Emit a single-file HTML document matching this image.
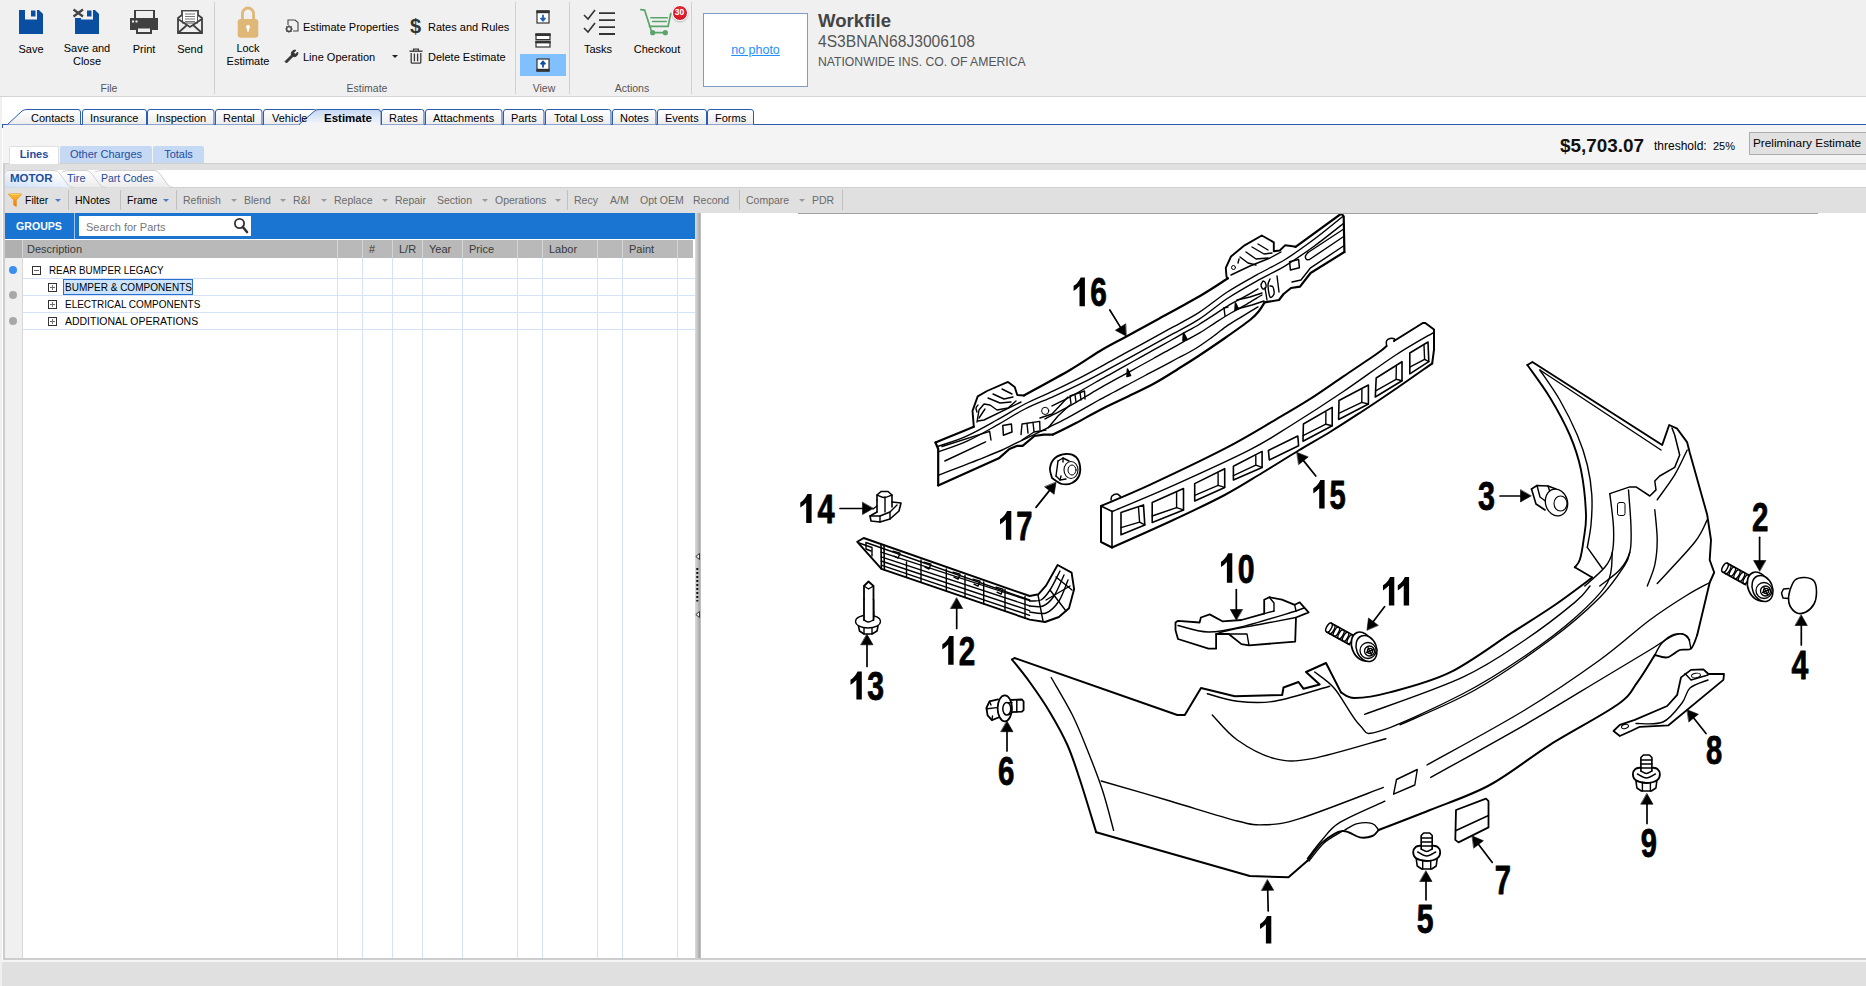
<!DOCTYPE html>
<html><head><meta charset="utf-8"><title>Workfile</title>
<style>
*{box-sizing:border-box;margin:0;padding:0}
html,body{width:1866px;height:986px;overflow:hidden;background:#fff}
body{font-family:"Liberation Sans",sans-serif;font-size:11px;color:#000;position:relative}
.abs{position:absolute}
.t{position:absolute;white-space:nowrap;line-height:13px}
.c{text-align:center}
.mt{top:112px}
/* ribbon */
#ribbon{left:0;top:0;width:1866px;height:96px;background:#f0f0f0}
#ribline{left:0;top:96px;width:1866px;height:1px;background:#d4d4d4}
.vsep{position:absolute;width:1px;background:#d0d0d0;top:2px;height:92px}
.grp{position:absolute;top:82px;font-size:10.5px;color:#555;white-space:nowrap;line-height:12px;transform:translateX(-50%)}
/* main tabs */
#tabband{left:0;top:97px;width:1866px;height:28px;background:#fff}
#leftedge{left:0;top:97px;width:2px;height:889px;background:#f0f0f0}
.mtab{position:absolute;top:109px;height:16px;border:1px solid #2b5cb0;border-bottom:none;border-radius:3px 3px 0 0;background:linear-gradient(#fff,#f0f0f0);font-size:11px;line-height:15px;text-align:center;white-space:nowrap}
#tabline{left:2px;top:124px;width:1864px;height:1px;background:#2b5cb0}
#sub{left:3px;top:125px;width:1863px;height:38px;background:#f4f4f4}
.stab{position:absolute;top:146px;height:17px;font-size:11px;line-height:16px;text-align:center;color:#1f4e9c;background:#c5d9f5;border-radius:2px 2px 0 0;white-space:nowrap}
#band1{left:4px;top:163px;width:1862px;height:7px;background:#e0e0e0;border-top:1px solid #d0d0d0}
#band2{left:5px;top:170px;width:1861px;height:17px;background:#fff}
#toolbar{left:5px;top:187px;width:1861px;height:26px;background:#e0e0e0;border-top:1px solid #d0d0d0}
.tb{position:absolute;top:194px;font-size:10.5px;line-height:13px;white-space:nowrap;color:#6a6a6a}
.tb.k{color:#000}
.dd{position:absolute;top:199px;width:0;height:0;border-left:3px solid transparent;border-right:3px solid transparent;border-top:3px solid #999}
.dd.b{border-top-color:#4a78c8}
.tsep{position:absolute;top:190px;width:1px;height:20px;background:#c0c0c0}
/* left panel */
#bluebar{left:5px;top:213px;width:690px;height:26px;background:#1a74d2}
#thead{left:5px;top:240px;width:688px;height:18px;background:#b9b9b9}
.th{position:absolute;top:243px;font-size:11px;line-height:13px;color:#3a3a3a;white-space:nowrap}
.hl{position:absolute;top:240px;height:18px;width:1px;background:#d4d4d4}
.vl{position:absolute;top:258px;height:700px;width:1px;background:#d4e3f8}
.rl{position:absolute;left:23px;width:672px;height:1px;background:#d4e3f8}
#gutter{left:5px;top:258px;width:18px;height:700px;background:#f0f0f0;border-right:1px solid #d8d8d8}
.row{position:absolute;transform-origin:0 0;font-size:11px;line-height:13px;white-space:nowrap;color:#000}
.box{position:absolute;width:9px;height:9px;border:1px solid #333;background:#fff}
.box:before{content:"";position:absolute;left:1px;top:3px;width:5px;height:1px;background:#666}
.box.p:after{content:"";position:absolute;left:3px;top:1px;width:1px;height:5px;background:#777}
.dot{position:absolute;width:8px;height:8px;border-radius:50%;background:#a8a8a8}
#split{left:695px;top:213px;width:6px;height:745px;background:linear-gradient(90deg,#dcdcdc,#c8c8c8 35%,#ababab 75%,#b8b8b8 90%,#dadada)}
#status{left:2px;top:960px;width:1864px;height:26px;background:#e0e0e0;border-top:2px solid #f5f5f5}
#frameL{left:3px;top:163px;width:2px;height:797px;background:#cdcdcd}
#frameB{left:3px;top:958px;width:1863px;height:2px;background:#cdcdcd}
</style></head><body>
<div class="abs" id="ribbon"></div>
<div class="abs" id="ribline"></div>
<div class="abs" id="tabband"></div>
<div class="abs" id="sub"></div>
<div class="abs" id="band1"></div>
<div class="abs" id="band2"></div>
<div class="abs" id="toolbar"></div>
<div class="abs" id="leftedge"></div>
<div class="abs" id="tabline"></div>
<!--RIBBON-->
<!-- File group -->
<svg class="abs" style="left:19px;top:10px" width="24" height="24" viewBox="0 0 24 24"><path d="M0 0H20L24 4V24H0Z" fill="#0a4ea2"/><rect x="6" y="0" width="12" height="9.5" fill="#f0f0f0"/><rect x="12" y="0.5" width="4.5" height="6" fill="#0a4ea2"/></svg>
<svg class="abs" style="left:72px;top:8px" width="28" height="26" viewBox="0 0 28 26"><path d="M3 2H23L27 6V26H3Z" fill="#0a4ea2"/><rect x="9" y="2" width="12" height="9.5" fill="#f0f0f0"/><rect x="15" y="2.5" width="4.5" height="6" fill="#0a4ea2"/><rect x="0" y="0" width="9" height="10" fill="#f0f0f0"/><path d="M1.5 1.5L11 8.5M11 1.5L1.5 8.5" stroke="#444" stroke-width="2.2" fill="none"/></svg>
<svg class="abs" style="left:130px;top:10px" width="28" height="24" viewBox="0 0 28 24"><rect x="5" y="0" width="19" height="10" fill="none" stroke="#404040" stroke-width="2"/><rect x="0" y="8" width="28" height="12" fill="#404040"/><rect x="2" y="10.5" width="2" height="2" fill="#f0f0f0"/><rect x="5.5" y="10.5" width="2" height="2" fill="#f0f0f0"/><rect x="7" y="17.5" width="14" height="5.5" fill="#f0f0f0" stroke="#404040" stroke-width="2"/></svg>
<svg class="abs" style="left:177px;top:8px" width="26" height="27" viewBox="0 0 26 27"><path d="M1 10L5 7V3H21V7L25 10V25H1Z" fill="#f0f0f0" stroke="#404040" stroke-width="1.8"/><rect x="5.5" y="3" width="15" height="12" fill="#fff" stroke="#555" stroke-width="1"/><path d="M8 6H18M8 8.5H18M8 11H18M8 13.5H18" stroke="#777" stroke-width="1"/><path d="M1 11L13 19L25 11M1 25L10 17M25 25L16 17" stroke="#404040" stroke-width="1.8" fill="none"/></svg>
<div class="t c" style="left:6px;top:43px;width:50px">Save</div>
<div class="t c" style="left:57px;top:42px;width:60px">Save and<br>Close</div>
<div class="t c" style="left:119px;top:43px;width:50px">Print</div>
<div class="t c" style="left:165px;top:43px;width:50px">Send</div>
<div class="grp" style="left:109px">File</div>
<div class="vsep" style="left:214px"></div>
<!-- Estimate group -->
<svg class="abs" style="left:236px;top:5px" width="24" height="34" viewBox="0 0 24 34"><path d="M6.4 16V8.6a5.6 5.6 0 0 1 11.2 0V16" fill="none" stroke="#dfb877" stroke-width="2.8"/><rect x="1.7" y="13.9" width="20.6" height="18.9" rx="3" fill="#dfb877"/><circle cx="12" cy="22" r="2" fill="#fff"/><rect x="11.1" y="22" width="1.8" height="4.6" fill="#fff"/></svg>
<div class="t c" style="left:218px;top:42px;width:60px">Lock<br>Estimate</div>
<svg class="abs" style="left:284px;top:18px" width="16" height="16" viewBox="0 0 16 16"><path d="M4 7V2H11L14 4.5V13H9" fill="none" stroke="#444" stroke-width="1.1"/><circle cx="5" cy="11" r="2.4" fill="none" stroke="#444" stroke-width="1.4"/><path d="M5 7.3V8.3M5 13.7V14.7M1.3 11H2.3M7.7 11H8.7M2.4 8.4L3.1 9.1M6.9 12.9L7.6 13.6M7.6 8.4L6.9 9.1M3.1 12.9L2.4 13.6" stroke="#444" stroke-width="1.2"/></svg>
<div class="t" style="left:303px;top:21px">Estimate Properties</div>
<div class="t" style="left:410px;top:15px;font-size:20px;font-weight:bold;line-height:22px;color:#333">$</div>
<div class="t" style="left:428px;top:21px">Rates and Rules</div>
<svg class="abs" style="left:284px;top:49px" width="15" height="15" viewBox="0 0 15 15"><path d="M1 12.5L7.5 6A3.6 3.6 0 0 1 12 1.3L9.6 3.7L11.3 5.4L13.7 3A3.6 3.6 0 0 1 9 7.5L2.5 14Z" fill="#333" stroke="#333" stroke-width="0.9" stroke-linejoin="round"/></svg>
<div class="t" style="left:303px;top:51px">Line Operation</div>
<div class="abs" style="left:392px;top:55px;width:0;height:0;border-left:3px solid transparent;border-right:3px solid transparent;border-top:3px solid #222"></div>
<svg class="abs" style="left:409px;top:48px" width="14" height="16" viewBox="0 0 14 16" fill="none" stroke="#3a3a3a"><path d="M0.5 3.2H13.5" stroke-width="1.4"/><path d="M4.5 3V1.2H9.5V3" stroke-width="1.2"/><path d="M2.2 5V14.2Q2.2 15.2 3.2 15.2H10.800Q11.800 15.2 11.800 14.2V5" stroke-width="1.3"/><path d="M5.4 5.500V13.2M8.6 5.500V13.2" stroke-width="1.3"/></svg>
<div class="t" style="left:428px;top:51px">Delete Estimate</div>
<div class="grp" style="left:367px">Estimate</div>
<div class="vsep" style="left:515px"></div>
<!-- View group -->
<div class="abs" style="left:520px;top:54px;width:46px;height:22px;background:#80c0ff"></div>
<svg class="abs" style="left:536px;top:10px" width="14" height="14" viewBox="0 0 14 14"><rect x="1" y="1" width="12" height="12" fill="#fff" stroke="#333" stroke-width="1.2"/><rect x="0.4" y="0.4" width="13.2" height="2.8" fill="#333"/><path d="M7 4.800V10M4.6 7.800L7 10.600L9.400 7.800" stroke="#1f5fb8" stroke-width="1.800" fill="none"/></svg>
<svg class="abs" style="left:535px;top:33px" width="16" height="15" viewBox="0 0 16 15"><rect x="1" y="1" width="14" height="5.600" fill="#fff" stroke="#333" stroke-width="1.2"/><rect x="0.4" y="0.4" width="15.2" height="2.600" fill="#333"/><rect x="1" y="8.400" width="14" height="5.600" fill="#fff" stroke="#333" stroke-width="1.2"/><rect x="0.4" y="7.800" width="15.2" height="2.600" fill="#333"/></svg>
<svg class="abs" style="left:536px;top:58px" width="14" height="14" viewBox="0 0 14 14"><rect x="1" y="1" width="12" height="12" fill="#fff" stroke="#333" stroke-width="1.2"/><rect x="0.4" y="10.800" width="13.2" height="2.800" fill="#333"/><path d="M7 9.600V4.400M4.600 6.400L7 3.600L9.400 6.400" stroke="#0a4ea2" stroke-width="1.800" fill="none"/></svg>
<div class="grp" style="left:544px">View</div>
<div class="vsep" style="left:569px"></div>
<!-- Actions group -->
<svg class="abs" style="left:583px;top:8px" width="33" height="28" viewBox="0 0 33 28"><path d="M1 7L5 11L12 2M1 20L5 24L12 15" fill="none" stroke="#333" stroke-width="1.6"/><path d="M16 5.2H32M16 12.100H32M16 19.2H32M16 26H32" stroke="#333" stroke-width="1.800"/></svg>
<div class="t c" style="left:573px;top:43px;width:50px">Tasks</div>
<svg class="abs" style="left:638px;top:7px" width="36" height="30" viewBox="0 0 36 30" fill="none" stroke="#5aa469" stroke-linecap="round"><path d="M2.8 2.6L6.6 3.1L13.2 23.6" stroke-width="1.7"/><path d="M32.7 6.7L30.1 19.3H11.5" stroke-width="1.7"/><path d="M12.9 10.700H29.3M14.500 14.400H28.400" stroke-width="1.5"/><path d="M14 25.600H28" stroke-width="1.6"/><circle cx="14.700" cy="25.700" r="2.600" fill="#5aa469" stroke="none"/><circle cx="27.300" cy="25.700" r="2.600" fill="#5aa469" stroke="none"/></svg>
<div class="abs" style="left:671.5px;top:5px;width:16px;height:16px;border-radius:50%;background:radial-gradient(circle at 50% 35%,#e8303c,#c8101c);border:1.5px solid #fff;box-shadow:0 1px 2px rgba(0,0,0,.25);color:#fff;font-size:8.5px;font-weight:bold;line-height:13px;text-align:center">30</div>
<div class="t c" style="left:627px;top:43px;width:60px">Checkout</div>
<div class="grp" style="left:632px">Actions</div>
<div class="vsep" style="left:691px"></div>
<!-- photo + workfile -->
<div class="abs" style="left:703px;top:13px;width:105px;height:74px;background:#fff;border:1px solid #7f9bc4"></div>
<div class="t c" style="left:703px;top:44px;width:105px;color:#1e90ff;text-decoration:underline;font-size:12.5px">no photo</div>
<div class="t" style="left:818px;top:10px;font-size:18.6px;line-height:21px;color:#444;font-weight:bold">Workfile</div>
<div class="t" style="left:818px;top:33px;font-size:15.6px;line-height:17px;color:#555">4S3BNAN68J3006108</div>
<div class="t" style="left:818px;top:55px;font-size:12.2px;line-height:14px;color:#555">NATIONWIDE INS. CO. OF AMERICA</div>
<!--/RIBBON-->
<!--TABS-->
<svg class="abs" style="left:0;top:105px" width="800" height="24" viewBox="0 105 800 24">
<defs><linearGradient id="tg" x1="0" y1="0" x2="0" y2="1"><stop offset="0" stop-color="#ffffff"/><stop offset="1" stop-color="#ececec"/></linearGradient><linearGradient id="sg" x1="0" y1="0" x2="0" y2="1"><stop offset="0" stop-color="#c4d7f2"/><stop offset="0.85" stop-color="#f0f3f9"/><stop offset="1" stop-color="#f4f4f4"/></linearGradient></defs>
<g fill="url(#tg)" stroke="#2b5cb0" stroke-width="1">
<path d="M7.5 124.5L22 111Q24 109.5 27 109.5H78Q80.5 109.5 80.5 112V124.5"/>
<path d="M82.5 124.5V112Q82.5 109.5 85 109.5H144Q146.5 109.5 146.5 112V124.5"/>
<path d="M147.5 124.5V112Q147.5 109.5 150 109.5H211.500Q214 109.5 214 112V124.5"/>
<path d="M215.500 124.5V112Q215.500 109.5 218 109.5H259.500Q262 109.5 262 112V124.5"/>
<path d="M263.500 124.5V112Q263.500 109.5 266 109.5H314.500Q317 109.5 317 112V124.5"/>
<path d="M381.500 124.5V112Q381.500 109.5 384 109.5H421.500Q424 109.5 424 112V124.5"/>
<path d="M425.500 124.5V112Q425.500 109.5 428 109.5H499.500Q502 109.5 502 112V124.5"/>
<path d="M503.500 124.5V112Q503.500 109.5 506 109.5H541.500Q544 109.5 544 112V124.5"/>
<path d="M545.500 124.5V112Q545.500 109.5 548 109.5H608.500Q611 109.5 611 112V124.5"/>
<path d="M612.500 124.5V112Q612.500 109.5 615 109.5H653.500Q656 109.5 656 112V124.5"/>
<path d="M657.500 124.5V112Q657.500 109.5 660 109.5H704Q706.500 109.5 706.500 112V124.5"/>
<path d="M707.500 124.5V112Q707.500 109.5 710 109.5H751Q753.500 109.5 753.500 112V124.5"/>
</g>
<path d="M299 125.500L314 111.500Q316 109.500 319 109.500H378Q380.500 109.500 380.500 112V125.500Z" fill="url(#sg)" stroke="none"/>
<path d="M299 124.5L314 111.500Q316 109.500 319 109.500H378Q380.500 109.500 380.500 112" fill="none" stroke="#2b5cb0" stroke-width="1"/><path d="M380.500 112V124.5" fill="none" stroke="#9db6df" stroke-width="1"/>
<path d="M2.5 128V124.5" stroke="#2b5cb0" fill="none"/>
</svg>
<div class="t mt" style="left:31px">Contacts</div>
<div class="t mt" style="left:90px">Insurance</div>
<div class="t mt" style="left:156px">Inspection</div>
<div class="t mt" style="left:223px">Rental</div>
<div class="t mt" style="left:272px">Vehicle</div>
<div class="t mt" style="left:324px;font-weight:bold;font-size:11.5px">Estimate</div>
<div class="t mt" style="left:389px">Rates</div>
<div class="t mt" style="left:433px">Attachments</div>
<div class="t mt" style="left:511px">Parts</div>
<div class="t mt" style="left:554px">Total Loss</div>
<div class="t mt" style="left:620px">Notes</div>
<div class="t mt" style="left:665px">Events</div>
<div class="t mt" style="left:715px">Forms</div>
<!-- sub tabs -->
<div class="stab" style="left:9px;width:50px;background:#fff;font-weight:bold;border:1px solid #e0e0e0;border-bottom:none;height:18px;line-height:14px">Lines</div>
<div class="stab" style="left:60px;width:92px">Other Charges</div>
<div class="stab" style="left:153px;width:51px">Totals</div>
<!-- right totals -->
<div class="t" style="left:1560px;top:135px;font-size:18.9px;font-weight:bold;line-height:21px;color:#111">$5,703.07</div>
<div class="t" style="left:1654px;top:140px;font-size:12px">threshold:</div>
<div class="t" style="left:1713px;top:140px;font-size:11px">25%</div>
<div class="abs" style="left:1749px;top:132px;width:120px;height:23px;background:#e1e1e1;border:1px solid #adadad;font-size:11.8px;line-height:21px;padding-left:3px;white-space:nowrap">Preliminary Estimate</div>
<!-- motor tabs -->
<svg class="abs" style="left:5px;top:170px" width="180" height="18" viewBox="5 170 180 18">
<defs><linearGradient id="mg" x1="0" y1="1" x2="0.6" y2="0"><stop offset="0" stop-color="#cfe0f7"/><stop offset="0.6" stop-color="#eef4fc"/><stop offset="1" stop-color="#ffffff"/></linearGradient>
<linearGradient id="gg" x1="0" y1="0" x2="0" y2="1"><stop offset="0" stop-color="#ffffff"/><stop offset="1" stop-color="#ececec"/></linearGradient></defs>
<path d="M62 187.500H170L160 174Q158 170.500 154 170.500H56Z" fill="url(#gg)"/>
<path d="M5 187.500V173Q5 170.500 8 170.500H54Q58 170.500 60 174L70 187.500Z" fill="url(#mg)"/>
<path d="M5 173Q5 170.500 8 170.500H54Q58 170.500 60 174L68 185Q70 187.500 74 187.500" fill="none" stroke="#d0d0d0"/>
<path d="M62 172Q66 170.500 70 170.500H86Q90 170.500 92 174L100 185Q102 187.500 106 187.500" fill="none" stroke="#d0d0d0"/>
<path d="M95 172Q98 170.500 102 170.500H154Q158 170.500 160 174L168 185Q170 187.500 174 187.500" fill="none" stroke="#d0d0d0"/>
</svg>
<div class="t" style="left:10px;top:172px;font-weight:bold;color:#1f4e9c;font-size:11.5px">MOTOR</div>
<div class="t" style="left:67px;top:172px;color:#1f4e9c">Tire</div>
<div class="t" style="left:101px;top:172px;color:#1f4e9c;font-size:10.5px">Part Codes</div>
<!--/TABS-->
<!--TOOLBAR-->
<svg class="abs" style="left:8px;top:193px" width="14" height="14" viewBox="0 0 14 14"><defs><linearGradient id="fg" x1="0" y1="0" x2="0" y2="1"><stop offset="0" stop-color="#ffc83a"/><stop offset="0.45" stop-color="#ff9a16"/><stop offset="1" stop-color="#f57c00"/></linearGradient></defs><path d="M0.5 1.2H13.5L8.3 7V13.5L5.7 12V7Z" fill="url(#fg)" stroke="#e88a10" stroke-width="0.7"/><ellipse cx="7" cy="1.6" rx="6.2" ry="1" fill="#ffd866" stroke="#e89a20" stroke-width="0.5"/></svg>
<div class="tb k" style="left:25px">Filter</div><div class="dd b" style="left:55px"></div>
<div class="tsep" style="left:68px"></div>
<div class="tb k" style="left:75px">HNotes</div>
<div class="tsep" style="left:120px"></div>
<div class="tb k" style="left:127px">Frame</div><div class="dd b" style="left:163px"></div>
<div class="tsep" style="left:176px"></div>
<div class="tb" style="left:183px">Refinish</div><div class="dd" style="left:231px"></div>
<div class="tb" style="left:244px">Blend</div><div class="dd" style="left:280px"></div>
<div class="tb" style="left:293px">R&amp;I</div><div class="dd" style="left:321px"></div>
<div class="tb" style="left:334px">Replace</div><div class="dd" style="left:382px"></div>
<div class="tb" style="left:395px">Repair</div>
<div class="tb" style="left:437px">Section</div><div class="dd" style="left:482px"></div>
<div class="tb" style="left:495px">Operations</div><div class="dd" style="left:555px"></div>
<div class="tsep" style="left:567px"></div>
<div class="tb" style="left:574px">Recy</div>
<div class="tb" style="left:610px">A/M</div>
<div class="tb" style="left:640px">Opt OEM</div>
<div class="tb" style="left:693px">Recond</div>
<div class="tsep" style="left:739px"></div>
<div class="tb" style="left:746px">Compare</div><div class="dd" style="left:799px"></div>
<div class="tb" style="left:812px">PDR</div>
<div class="tsep" style="left:842px"></div>
<div class="abs" style="left:798px;top:213px;width:1020px;height:1px;background:#a0a0a0"></div>
<!--/TOOLBAR-->
<!--LEFT-->
<div class="abs" id="bluebar"></div>
<div class="t" style="left:16px;top:220px;font-size:10.6px;font-weight:bold;color:#fff">GROUPS</div>
<div class="abs" style="left:74px;top:213px;width:1px;height:26px;background:#9cc4f0"></div>
<div class="abs" style="left:79px;top:216px;width:172px;height:20px;background:#fff"></div>
<div class="t" style="left:86px;top:221px;color:#777">Search for Parts</div>
<svg class="abs" style="left:233px;top:217px" width="16" height="17" viewBox="0 0 16 17"><circle cx="6.5" cy="6.500" r="4.6" fill="none" stroke="#333" stroke-width="1.8"/><path d="M9.8 10L14 15" stroke="#333" stroke-width="2.6" stroke-linecap="round"/></svg>
<div class="abs" id="thead"></div>
<div class="abs" style="left:5px;top:240px;width:18px;height:18px;background:#b0b0b0"></div>
<div class="hl" style="left:22px"></div><div class="hl" style="left:337px"></div><div class="hl" style="left:362px"></div><div class="hl" style="left:392px"></div><div class="hl" style="left:422px"></div><div class="hl" style="left:462px"></div><div class="hl" style="left:517px"></div><div class="hl" style="left:542px"></div><div class="hl" style="left:597px"></div><div class="hl" style="left:622px"></div><div class="hl" style="left:677px"></div>
<div class="th" style="left:27px">Description</div><div class="th" style="left:369px">#</div><div class="th" style="left:399px">L/R</div><div class="th" style="left:429px">Year</div><div class="th" style="left:469px">Price</div><div class="th" style="left:549px">Labor</div><div class="th" style="left:629px">Paint</div>
<div class="abs" id="gutter"></div>
<div class="vl" style="left:337px"></div><div class="vl" style="left:362px"></div><div class="vl" style="left:392px"></div><div class="vl" style="left:422px"></div><div class="vl" style="left:462px"></div><div class="vl" style="left:517px"></div><div class="vl" style="left:542px"></div><div class="vl" style="left:597px"></div><div class="vl" style="left:622px"></div><div class="vl" style="left:677px"></div>
<div class="rl" style="top:278px"></div><div class="rl" style="top:295px"></div><div class="rl" style="top:312px"></div><div class="rl" style="top:329px"></div>
<div class="dot" style="left:9px;top:266px;background:#3b8ff0"></div>
<div class="dot" style="left:9px;top:291px"></div>
<div class="dot" style="left:9px;top:317px"></div>
<div class="box" style="left:32px;top:266px"></div>
<div class="row" style="left:49px;top:264px;transform:scaleX(0.893)">REAR BUMPER LEGACY</div>
<div class="box p" style="left:48px;top:283px"></div>
<div class="abs" style="left:63px;top:279px;width:130px;height:16px;background:#cce4fb;border:1px solid #2a6fd0"></div>
<div class="row" style="left:65px;top:281px;transform:scaleX(0.911)">BUMPER &amp; COMPONENTS</div>
<div class="box p" style="left:48px;top:300px"></div>
<div class="row" style="left:65px;top:298px;transform:scaleX(0.906)">ELECTRICAL COMPONENTS</div>
<div class="box p" style="left:48px;top:317px"></div>
<div class="row" style="left:65px;top:315px;transform:scaleX(0.951)">ADDITIONAL OPERATIONS</div>
<!--/LEFT-->
<div class="abs" id="split"></div>
<div class="abs" id="status"></div>
<div class="abs" id="frameL"></div><div class="abs" id="frameB"></div>
<svg class="abs" style="left:695px;top:550px" width="6" height="70" viewBox="695 550 6 70"><path d="M699.5 553.5V559.5L695.8 556.5Z M699.5 611.500V617.500L695.8 614.500Z" fill="#e8e8e8" stroke="#222" stroke-width="0.9"/><path d="M697.3 568v2M697.3 572v2M697.3 576v2M697.3 580v2M697.3 584v2M697.3 588v2M697.3 592v2M697.3 596v2M697.3 600v1.500" stroke="#111" stroke-width="2"/></svg>
<!--DIAGRAM-->
<svg class="abs" style="left:701px;top:214px" width="1165" height="745" viewBox="701 214 1165 745" stroke="#000" stroke-linejoin="round" stroke-linecap="round">
<g font-family="Liberation Sans, sans-serif" font-weight="bold" font-size="40" fill="#000" stroke="#000" stroke-width="0.8">
<path d="M1084.9 277.4 L1084.9 306.2 L1079.5 306.2 L1079.5 286.0 Q1077.0 288.9 1073.6 290.9 L1073.6 285.8 Q1078.0 283.2 1080.7 277.4 Z" fill="#000" stroke="none"/>
<text x="1090.2" y="306.2" textLength="16.6" lengthAdjust="spacingAndGlyphs">6</text>
<path d="M1324.6 479.9 L1324.6 508.6 L1319.2 508.6 L1319.2 488.5 Q1316.7 491.4 1313.3 493.4 L1313.3 488.2 Q1317.7 485.6 1320.4 479.9 Z" fill="#000" stroke="none"/>
<text x="1329.5" y="508.6" textLength="16.2" lengthAdjust="spacingAndGlyphs">5</text>
<path d="M1011.3 511.0 L1011.3 539.7 L1005.9 539.7 L1005.9 519.6 Q1003.4 522.5 1000.0 524.5 L1000.0 519.3 Q1004.4 516.7 1007.1 511.0 Z" fill="#000" stroke="none"/>
<text x="1016.2" y="539.7" textLength="16.2" lengthAdjust="spacingAndGlyphs">7</text>
<path d="M811.6 494.0 L811.6 523.0 L806.2 523.0 L806.2 502.7 Q803.7 505.6 800.3 507.6 L800.3 502.4 Q804.7 499.8 807.4 494.0 Z" fill="#000" stroke="none"/>
<text x="817.4" y="523.0" textLength="17.1" lengthAdjust="spacingAndGlyphs">4</text>
<path d="M861.8 671.6 L861.8 699.5 L856.4 699.5 L856.4 680.0 Q853.9 682.8 850.5 684.7 L850.5 679.7 Q854.9 677.2 857.6 671.6 Z" fill="#000" stroke="none"/>
<text x="867.2" y="699.5" textLength="16.8" lengthAdjust="spacingAndGlyphs">3</text>
<path d="M953.6 636.0 L953.6 664.7 L948.2 664.7 L948.2 644.6 Q945.7 647.5 942.3 649.5 L942.3 644.3 Q946.7 641.7 949.4 636.0 Z" fill="#000" stroke="none"/>
<text x="958.8" y="664.7" textLength="16.5" lengthAdjust="spacingAndGlyphs">2</text>
<path d="M1232.3 553.3 L1232.3 582.7 L1226.9 582.7 L1226.9 562.1 Q1224.4 565.1 1221.0 567.1 L1221.0 561.8 Q1225.4 559.2 1228.1 553.3 Z" fill="#000" stroke="none"/>
<text x="1237.8" y="582.7" textLength="16.8" lengthAdjust="spacingAndGlyphs">0</text>
<path d="M1394.3 577.0 L1394.3 605.6 L1388.9 605.6 L1388.9 585.6 Q1386.4 588.4 1383.0 590.4 L1383.0 585.3 Q1387.4 582.7 1390.1 577.0 Z" fill="#000" stroke="none"/>
<path d="M1409.1 577.0 L1409.1 605.6 L1403.7 605.6 L1403.7 585.6 Q1401.2 588.4 1397.8 590.4 L1397.8 585.3 Q1402.2 582.7 1404.9 577.0 Z" fill="#000" stroke="none"/>
<text x="998.0" y="785.0" textLength="16.4" lengthAdjust="spacingAndGlyphs">6</text>
<text x="1478.0" y="510.3" textLength="17.0" lengthAdjust="spacingAndGlyphs">3</text>
<text x="1752.0" y="531.0" textLength="16.4" lengthAdjust="spacingAndGlyphs">2</text>
<text x="1791.6" y="678.6" textLength="16.8" lengthAdjust="spacingAndGlyphs">4</text>
<text x="1706.0" y="763.5" textLength="16.2" lengthAdjust="spacingAndGlyphs">8</text>
<text x="1640.8" y="856.9" textLength="16.2" lengthAdjust="spacingAndGlyphs">9</text>
<text x="1494.8" y="893.6" textLength="16.2" lengthAdjust="spacingAndGlyphs">7</text>
<text x="1416.8" y="932.8" textLength="16.8" lengthAdjust="spacingAndGlyphs">5</text>
<path d="M1271.3 916.0 L1271.3 943.5 L1265.9 943.5 L1265.9 924.2 Q1263.4 927.0 1260.0 928.9 L1260.0 924.0 Q1264.4 921.5 1267.1 916.0 Z" fill="#000" stroke="none"/>
</g>
<path d="M1109.8 310.0 L1120.4 327.1" stroke-width="1.7" fill="none"/>
<path d="M1126.0 336.0 L1115.4 330.3 L1125.5 323.9 Z" fill="#000" stroke-width="0.6"/>
<path d="M1315.8 476.0 L1303.5 460.6" stroke-width="1.7" fill="none"/>
<path d="M1297.0 452.4 L1308.2 456.9 L1298.8 464.4 Z" fill="#000" stroke-width="0.6"/>
<path d="M1036.0 507.4 L1049.4 490.6" stroke-width="1.7" fill="none"/>
<path d="M1056.0 482.4 L1054.1 494.3 L1044.8 486.9 Z" fill="#000" stroke-width="0.6"/>
<path d="M840.0 508.5 L862.5 508.5" stroke-width="1.7" fill="none"/>
<path d="M873.0 508.5 L862.5 514.5 L862.5 502.5 Z" fill="#000" stroke-width="0.6"/>
<path d="M867.0 666.5 L867.0 644.8" stroke-width="1.7" fill="none"/>
<path d="M867.0 634.3 L873.0 644.8 L861.0 644.8 Z" fill="#000" stroke-width="0.6"/>
<path d="M956.7 628.5 L956.7 608.5" stroke-width="1.7" fill="none"/>
<path d="M956.7 598.0 L962.7 608.5 L950.7 608.5 Z" fill="#000" stroke-width="0.6"/>
<path d="M1236.3 589.6 L1236.3 609.5" stroke-width="1.7" fill="none"/>
<path d="M1236.3 620.0 L1230.3 609.5 L1242.3 609.5 Z" fill="#000" stroke-width="0.6"/>
<path d="M1384.7 606.6 L1373.3 621.6" stroke-width="1.7" fill="none"/>
<path d="M1367.0 630.0 L1368.5 618.0 L1378.1 625.2 Z" fill="#000" stroke-width="0.6"/>
<path d="M1007.0 751.0 L1007.0 731.7" stroke-width="1.7" fill="none"/>
<path d="M1007.0 721.2 L1013.0 731.7 L1001.0 731.7 Z" fill="#000" stroke-width="0.6"/>
<path d="M1500.0 496.0 L1520.5 496.0" stroke-width="1.7" fill="none"/>
<path d="M1531.0 496.0 L1520.5 502.0 L1520.5 490.0 Z" fill="#000" stroke-width="0.6"/>
<path d="M1759.6 537.3 L1759.6 560.5" stroke-width="1.7" fill="none"/>
<path d="M1759.6 571.0 L1753.6 560.5 L1765.6 560.5 Z" fill="#000" stroke-width="0.6"/>
<path d="M1801.3 645.0 L1801.3 625.5" stroke-width="1.7" fill="none"/>
<path d="M1801.3 615.0 L1807.3 625.5 L1795.3 625.5 Z" fill="#000" stroke-width="0.6"/>
<path d="M1706.0 733.5 L1693.7 718.0" stroke-width="1.7" fill="none"/>
<path d="M1687.2 709.8 L1698.4 714.3 L1689.0 721.8 Z" fill="#000" stroke-width="0.6"/>
<path d="M1647.0 823.6 L1647.0 804.2" stroke-width="1.7" fill="none"/>
<path d="M1647.0 793.7 L1653.0 804.2 L1641.0 804.2 Z" fill="#000" stroke-width="0.6"/>
<path d="M1492.3 862.4 L1478.6 844.4" stroke-width="1.7" fill="none"/>
<path d="M1472.3 836.0 L1483.4 840.7 L1473.9 848.0 Z" fill="#000" stroke-width="0.6"/>
<path d="M1426.0 899.8 L1426.0 881.5" stroke-width="1.7" fill="none"/>
<path d="M1426.0 871.0 L1432.0 881.5 L1420.0 881.5 Z" fill="#000" stroke-width="0.6"/>
<path d="M1268.2 911.0 L1267.7 890.3" stroke-width="1.7" fill="none"/>
<path d="M1267.5 879.8 L1273.7 890.2 L1261.7 890.4 Z" fill="#000" stroke-width="0.6"/>
<path d="M1012.0 659.5 L1014.5 658.0 L1177.3 715.0 L1184.8 715.0 L1201.0 688.0 L1234.8 696.2 L1282.2 695.0 L1283.5 687.5 L1298.5 682.0 L1303.4 688.7 L1319.7 684.5 L1306.0 672.0 L1326.0 663.0 L1341.0 692.4" stroke-width="2" fill="none" />
<path d="M1341.0 692.4 C1343.3 693.3 1346.5 698.0 1354.6 698.0 C1362.7 698.0 1373.7 696.7 1389.6 692.4 C1405.5 688.1 1429.5 682.4 1450.0 672.4 C1470.5 662.4 1494.9 643.6 1512.4 632.4 C1529.9 621.2 1541.5 614.1 1554.8 605.0 C1568.1 595.9 1586.0 582.1 1592.3 577.5" stroke-width="2" fill="none"/>
<path d="M1012.0 659.5 C1015.0 663.3 1023.7 673.7 1030.0 682.5 C1036.3 691.3 1043.8 702.0 1050.0 712.4 C1056.2 722.8 1062.4 733.7 1067.4 745.0 C1072.4 756.3 1075.2 765.5 1080.0 780.0 C1084.8 794.5 1093.5 823.6 1096.2 832.3" stroke-width="2" fill="none"/>
<path d="M1051.2 677.5 C1054.7 683.8 1066.4 702.9 1072.4 715.0 C1078.4 727.1 1082.4 737.5 1087.4 750.0 C1092.4 762.5 1098.0 776.6 1102.4 790.0 C1106.8 803.4 1111.7 823.6 1113.6 830.3" stroke-width="1.4" fill="none"/>
<path d="M1096.2 832.3 L1249.8 876.0 L1288.5 877.3 L1307.2 861.0" stroke-width="2" fill="none" />
<path d="M1307.2 861.0 C1309.7 857.9 1316.5 847.4 1322.4 842.4 C1328.3 837.4 1336.2 831.8 1342.4 831.0 C1348.7 830.2 1354.9 836.6 1359.9 837.4 C1364.9 838.2 1369.3 837.2 1372.4 836.0 C1375.5 834.8 1377.6 831.0 1378.6 830.0" stroke-width="1.9" fill="none"/>
<path d="M1378.6 830.0 C1387.2 826.7 1411.5 817.5 1430.0 810.0 C1448.5 802.5 1469.8 795.9 1489.8 785.0 C1509.8 774.1 1528.7 758.2 1549.9 744.8 C1571.2 731.4 1602.7 715.2 1617.3 704.8 C1631.9 694.4 1631.0 690.7 1637.3 682.4 C1643.5 674.1 1651.9 659.6 1654.8 655.0" stroke-width="2" fill="none"/>
<path d="M1344.9 829.9 C1347.0 828.9 1352.8 824.6 1357.4 823.6 C1362.0 822.6 1368.9 822.6 1372.4 823.6 C1375.9 824.6 1377.6 828.9 1378.6 829.9" stroke-width="1.4" fill="none"/>
<path d="M1307.4 858.6 C1309.9 855.5 1316.8 845.8 1322.2 839.8 C1327.6 833.8 1329.5 828.8 1339.9 822.4 C1350.4 816.0 1377.4 804.7 1384.9 801.2" stroke-width="1.4" fill="none"/>
<path d="M1309.0 861.0 C1311.5 858.0 1318.7 847.8 1324.0 843.0 C1329.3 838.2 1338.2 833.8 1341.0 832.0" stroke-width="1.4" fill="none"/>
<path d="M1101.2 781.0 C1112.7 784.3 1147.3 794.3 1170.0 801.0 C1192.7 807.7 1221.5 817.0 1237.3 821.0 C1253.1 825.0 1254.3 825.2 1264.7 824.8 C1275.1 824.4 1279.9 824.8 1299.7 818.6 C1319.5 812.4 1369.5 792.6 1383.4 787.4" stroke-width="1.4" fill="none"/>
<path d="M1396.5 779.5 L1417.3 769.5 L1414.8 785.0 L1393.6 794.2 Z" stroke-width="1.4" fill="none" />
<path d="M1212.3 715.0 C1216.5 719.2 1226.9 732.7 1237.3 740.0 C1247.7 747.3 1262.2 755.5 1274.7 758.6 C1287.2 761.7 1293.7 761.9 1312.2 758.6 C1330.7 755.3 1373.6 742.0 1385.9 738.7" stroke-width="1.4" fill="none"/>
<path d="M1207.3 693.7 C1212.3 695.0 1226.1 700.0 1237.3 701.2 C1248.5 702.5 1259.3 703.7 1274.7 701.2 C1290.1 698.7 1320.5 688.7 1329.7 686.2" stroke-width="1.4" fill="none"/>
<path d="M1314.7 672.0 C1318.0 674.8 1327.2 679.9 1334.7 688.7 C1342.2 697.5 1352.1 717.9 1359.6 725.0 C1367.1 732.1 1362.5 736.4 1379.6 731.2 C1396.7 726.0 1438.2 706.5 1462.4 694.0 C1486.6 681.5 1506.2 668.7 1524.9 656.0 C1543.6 643.3 1561.1 630.2 1574.8 618.0 C1588.5 605.8 1601.0 594.0 1607.3 583.0 C1613.5 572.0 1611.5 557.4 1612.3 552.3" stroke-width="1.4" fill="none"/>
<path d="M1364.6 714.4 C1380.9 708.2 1435.7 689.8 1462.4 677.4 C1489.1 665.0 1506.2 652.5 1524.9 640.0 C1543.6 627.5 1564.0 611.4 1574.8 602.4 C1585.6 593.4 1587.5 588.7 1590.0 586.0" stroke-width="1.4" fill="none"/>
<path d="M1427.0 765.0 C1443.3 755.8 1496.1 727.5 1524.9 710.0 C1553.7 692.5 1579.0 675.0 1599.8 660.0 C1620.6 645.0 1635.2 630.8 1649.8 620.0 C1664.4 609.2 1677.2 601.2 1687.2 595.0 C1697.2 588.8 1706.0 584.6 1709.7 582.5" stroke-width="1.4" fill="none"/>
<path d="M1430.8 777.4 C1446.5 768.6 1496.7 741.0 1524.9 724.8 C1553.1 708.6 1579.0 692.5 1599.8 680.0 C1620.6 667.5 1638.1 657.1 1649.8 650.0 C1661.5 642.9 1664.3 640.1 1669.7 637.4 C1675.1 634.7 1678.9 633.3 1682.2 633.7 C1685.5 634.1 1688.5 639.0 1689.7 640.0" stroke-width="1.4" fill="none"/>
<path d="M1400.0 724.8 C1412.5 719.0 1450.0 704.1 1475.0 690.0 C1500.0 675.9 1529.1 655.4 1549.9 640.0 C1570.7 624.6 1587.3 609.9 1599.8 597.4 C1612.3 584.9 1619.8 572.5 1624.8 565.0 C1629.8 557.5 1629.0 554.4 1629.8 552.3" stroke-width="1.4" fill="none"/>
<path d="M1654.8 655.0 C1656.9 655.4 1663.0 658.2 1667.2 657.4 C1671.4 656.6 1675.7 651.5 1679.7 650.0 C1683.7 648.5 1688.1 651.1 1691.0 648.6 C1693.9 646.1 1696.2 637.3 1697.2 635.0" stroke-width="1.8" fill="none"/>
<path d="M1697.2 635.0 L1709.7 582.5 L1714.2 572.5 L1709.7 560.0 L1711.0 540.0 L1707.2 514.8 L1689.7 452.4 L1687.2 442.4 L1677.2 428.7 L1669.2 425.0 L1662.2 445.0 L1532.4 362.0 L1527.4 365.0" stroke-width="1.9" fill="none" />
<path d="M1654.8 655.0 C1656.0 653.0 1658.8 646.4 1662.0 643.0 C1665.2 639.6 1669.8 635.7 1674.0 634.5 C1678.2 633.3 1684.2 633.6 1687.0 636.0 C1689.8 638.4 1690.3 646.5 1691.0 648.6" stroke-width="1.4" fill="none"/>
<path d="M1539.9 370.0 L1661.0 450.0" stroke-width="1.4" fill="none" />
<path d="M1527.4 365.0 C1531.2 370.4 1542.8 385.7 1549.9 397.4 C1557.0 409.1 1564.6 422.9 1569.8 435.0 C1575.0 447.1 1578.3 456.7 1581.0 470.0 C1583.7 483.3 1585.6 503.2 1586.0 514.8 C1586.4 526.4 1584.6 532.3 1583.6 539.8 C1582.6 547.3 1581.3 555.2 1579.8 559.8 C1578.3 564.4 1575.6 566.0 1574.8 567.3" stroke-width="1.9" fill="none"/>
<path d="M1574.8 567.3 L1592.3 577.5" stroke-width="1.8" fill="none" />
<path d="M1539.9 370.0 C1543.2 375.0 1553.6 389.2 1559.8 400.0 C1566.0 410.8 1572.7 424.2 1577.3 435.0 C1581.9 445.8 1584.9 455.0 1587.3 465.0 C1589.7 475.0 1591.2 484.8 1591.8 494.8 C1592.4 504.8 1591.8 516.0 1591.0 524.8 C1590.2 533.5 1587.9 543.5 1587.3 547.3" stroke-width="1.4" fill="none"/>
<path d="M1587.3 547.3 L1602.3 568.5" stroke-width="1.4" fill="none" />
<path d="M1609.8 493.6 L1629.8 486.9 L1636.0 486.9 L1649.8 496.0 L1656.0 489.9 L1654.8 481.0 L1659.7 476.0 L1674.7 467.4 L1679.7 455.0 L1674.7 435.0 L1672.0 428.0" stroke-width="1.5" fill="none" />
<path d="M1609.8 493.6 C1610.4 499.2 1613.1 517.5 1613.5 527.3 C1613.9 537.1 1613.8 545.6 1612.3 552.3 C1610.8 559.0 1609.4 561.7 1604.8 567.3 C1600.2 572.9 1588.1 582.9 1584.8 586.0" stroke-width="1.4" fill="none"/>
<path d="M1628.5 489.9 C1628.9 496.1 1630.8 516.9 1631.0 527.3 C1631.2 537.7 1631.7 545.2 1629.8 552.3 C1627.9 559.4 1624.8 564.2 1619.8 569.8 C1614.8 575.4 1603.1 583.3 1599.8 586.0" stroke-width="1.4" fill="none"/>
<path d="M1654.8 509.8 C1655.2 514.8 1657.2 530.6 1657.2 539.8 C1657.2 549.0 1656.5 557.1 1654.8 564.8 C1653.1 572.5 1648.5 582.5 1647.3 586.0" stroke-width="1.4" fill="none"/>
<path d="M1687.2 450.0 C1685.1 454.1 1679.7 466.6 1674.7 474.9 C1669.7 483.2 1660.1 495.6 1657.2 499.8" stroke-width="1.4" fill="none"/>
<path d="M1707.2 519.8 C1705.1 523.5 1703.0 531.7 1694.7 542.3 C1686.4 552.9 1663.5 576.6 1657.2 583.5" stroke-width="1.4" fill="none"/>
<rect x="1617.5" y="502.5" width="7.5" height="13" rx="2" stroke-width="1" fill="none"/>
<path d="M935.5 442.5 C938.8 441.2 948.6 437.1 955.0 434.5 C961.4 431.9 970.7 428.0 973.8 426.7" stroke-width="2.2" fill="none"/>
<path d="M1024.0 395.5 C1031.7 391.2 1057.3 377.4 1070.0 370.0 C1082.7 362.6 1090.7 356.6 1100.0 351.0 C1109.3 345.4 1116.6 341.9 1126.0 336.7 C1135.4 331.5 1144.3 326.8 1156.6 320.0 C1168.9 313.2 1188.1 302.9 1200.0 296.0 C1211.9 289.1 1223.3 281.2 1228.0 278.3" stroke-width="2.2" fill="none"/>
<path d="M1295.6 246.8 L1341.4 213.5" stroke-width="2.2" fill="none" />
<path d="M973.8 426.7 L972.5 410.9 L977.7 396.4 L987.0 391.0 L1008.0 381.9 L1014.7 387.0 L1017.3 395.0 L1024.0 395.5" stroke-width="1.9" fill="none" />
<path d="M977.0 422.0 L979.0 410.0 L984.0 404.0 L990.0 405.0 L997.0 410.0 L1008.0 408.0 L1016.0 401.0" stroke-width="1.4" fill="none" />
<path d="M979.0 418.0 L985.0 409.0" stroke-width="1.4" fill="none" />
<path d="M988.0 398.0 L1000.0 403.0 L1011.0 402.0" stroke-width="1.4" fill="none" />
<path d="M993.0 394.0 L1004.0 399.0 L1013.0 397.0" stroke-width="1.4" fill="none" />
<path d="M1002.0 389.0 L1012.0 394.0" stroke-width="1.4" fill="none" />
<path d="M978.0 421.0 L984.0 420.0 L1021.0 402.0" stroke-width="1.4" fill="none" />
<path d="M977.0 412.0 C976.8 411.3 975.8 409.2 976.0 408.0 C976.2 406.8 977.7 405.5 978.0 405.0" stroke-width="1.4" fill="none"/>
<path d="M1228.0 278.3 L1226.5 276.8 L1225.8 267.8 L1231.0 256.5 L1244.6 245.3 L1261.8 235.5 L1273.8 242.3 L1273.8 251.3 L1279.8 250.5 L1285.0 245.3 L1291.0 246.0 L1295.6 246.8" stroke-width="1.9" fill="none" />
<path d="M1231.0 275.0 L1250.0 266.0 L1270.0 258.0 L1281.0 252.0" stroke-width="1.4" fill="none" />
<path d="M1240.0 257.0 L1248.0 263.0 L1256.0 265.0" stroke-width="1.4" fill="none" />
<path d="M1246.0 252.0 L1256.0 259.0 L1268.0 258.0" stroke-width="1.4" fill="none" />
<path d="M1252.0 247.0 L1264.0 254.0 L1272.0 253.0" stroke-width="1.4" fill="none" />
<path d="M1258.0 244.0 L1268.0 250.0" stroke-width="1.4" fill="none" />
<path d="M1239.0 259.0 L1238.0 263.0" stroke-width="1.4" fill="none" />
<circle cx="1233.5" cy="267.5" r="2" stroke-width="1" fill="none"/>
<path d="M1341.4 213.5 L1343.7 216.5 L1344.4 252.0" stroke-width="2.2" fill="none" />
<path d="M935.5 442.5 L938.2 449.0 L938.2 485.4" stroke-width="2.2" fill="none" />
<path d="M938.2 485.4 L998.8 458.3 L1009.4 449.0 L1017.3 445.8 L1022.6 445.8 L1034.4 436.0 L1043.7 434.6 L1052.9 434.6" stroke-width="2.2" fill="none" />
<path d="M1052.9 434.6 C1056.8 432.7 1068.2 427.1 1076.0 423.0 C1083.8 418.9 1091.3 414.4 1100.0 410.0 C1108.7 405.6 1118.8 401.0 1128.0 396.5 C1137.2 392.0 1146.7 387.6 1155.0 383.0 C1163.3 378.4 1170.5 373.7 1178.0 369.0 C1185.5 364.3 1192.2 360.2 1200.0 355.0 C1207.8 349.8 1216.7 343.8 1225.0 338.0 C1233.3 332.2 1244.3 324.5 1250.0 320.0 C1255.7 315.5 1256.6 313.9 1259.0 311.0 C1261.4 308.1 1263.7 303.8 1264.6 302.4" stroke-width="2.2" fill="none"/>
<path d="M1264.6 302.4 L1279.0 300.0 L1283.6 294.0 L1291.0 288.0 L1300.0 286.6 L1310.6 273.0 L1344.4 252.0" stroke-width="2.2" fill="none" />
<path d="M938.2 446.4 C943.0 444.6 957.5 440.1 967.1 435.8 C976.8 431.5 986.4 425.9 996.0 420.5 C1005.7 415.2 1015.3 409.0 1024.9 404.0 C1034.6 399.0 1044.2 395.3 1053.9 390.6 C1063.5 386.0 1073.1 381.3 1082.8 376.3 C1092.4 371.3 1102.0 365.9 1111.7 360.6 C1121.3 355.3 1131.0 350.1 1140.6 344.8 C1150.2 339.5 1159.9 334.2 1169.5 328.9 C1179.2 323.5 1188.8 319.0 1198.4 312.9 C1208.1 306.7 1217.7 298.3 1227.3 292.0 C1237.0 285.7 1246.6 280.5 1256.3 275.1 C1265.9 269.7 1275.5 265.4 1285.2 259.5 C1294.8 253.5 1304.4 246.5 1314.1 239.3 C1323.7 232.1 1338.2 220.2 1343.0 216.3" stroke-width="1.4" fill="none"/>
<path d="M938.2 451.9 C943.0 450.1 957.5 445.5 967.1 441.1 C976.8 436.8 986.4 431.1 996.0 425.7 C1005.7 420.4 1015.3 413.9 1024.9 409.0 C1034.6 404.1 1044.2 400.7 1053.9 396.3 C1063.5 392.0 1073.1 387.5 1082.8 382.7 C1092.4 377.9 1102.0 372.6 1111.7 367.4 C1121.3 362.2 1131.0 356.9 1140.6 351.6 C1150.2 346.3 1159.9 341.0 1169.5 335.7 C1179.2 330.3 1188.8 325.9 1198.4 319.7 C1208.1 313.5 1217.7 304.9 1227.3 298.5 C1237.0 292.1 1246.6 286.7 1256.3 281.3 C1265.9 275.8 1275.5 271.6 1285.2 265.8 C1294.8 260.0 1304.4 253.2 1314.1 246.2 C1323.7 239.3 1338.2 227.6 1343.0 223.8" stroke-width="1.4" fill="none"/>
<path d="M1052.0 406.0 C1054.5 404.8 1061.8 401.3 1066.7 398.7 C1071.6 396.1 1076.5 393.3 1081.4 390.5 C1086.3 387.7 1091.2 384.8 1096.1 382.0 C1101.0 379.2 1106.0 376.5 1110.9 373.8 C1115.8 371.0 1120.7 368.3 1125.6 365.6 C1130.5 362.9 1135.4 360.1 1140.3 357.4 C1145.2 354.7 1150.1 352.0 1155.0 349.2 C1159.9 346.5 1164.8 343.7 1169.7 341.0 C1174.6 338.2 1179.5 335.5 1184.4 332.7 C1189.3 330.0 1194.2 327.5 1199.1 324.5 C1204.0 321.5 1209.0 318.1 1213.9 314.9 C1218.8 311.7 1223.7 308.2 1228.6 305.3 C1233.5 302.3 1238.4 300.1 1243.3 297.4 C1248.2 294.7 1255.5 290.3 1258.0 288.9" stroke-width="1.4" fill="none"/>
<path d="M1045.0 418.9 C1047.6 417.5 1055.3 413.6 1060.5 410.8 C1065.7 408.1 1070.8 405.3 1076.0 402.3 C1081.2 399.4 1086.3 396.1 1091.5 393.1 C1096.7 390.0 1101.8 387.1 1107.0 384.1 C1112.2 381.2 1117.3 378.4 1122.5 375.6 C1127.7 372.7 1132.8 369.9 1138.0 367.0 C1143.2 364.2 1148.3 361.3 1153.5 358.5 C1158.7 355.6 1163.8 352.7 1169.0 349.9 C1174.2 347.0 1179.3 344.1 1184.5 341.2 C1189.7 338.4 1194.8 335.7 1200.0 332.6 C1205.2 329.5 1210.3 325.8 1215.5 322.6 C1220.7 319.3 1225.8 316.0 1231.0 313.0 C1236.2 309.9 1241.3 307.3 1246.5 304.3 C1251.7 301.3 1259.4 296.5 1262.0 295.0" stroke-width="1.4" fill="none"/>
<path d="M938.2 475.4 C940.9 474.3 948.9 471.2 954.2 469.1 C959.5 467.1 964.9 465.0 970.2 462.9 C975.5 460.8 980.8 458.8 986.2 456.6 C991.5 454.5 996.8 452.4 1002.2 450.0 C1007.5 447.6 1012.8 444.7 1018.2 442.1 C1023.5 439.6 1028.8 437.2 1034.1 434.6 C1039.5 432.0 1044.8 429.3 1050.1 426.6 C1055.5 424.0 1060.8 421.5 1066.1 418.7 C1071.5 415.8 1076.8 412.8 1082.1 409.7 C1087.4 406.7 1092.8 403.5 1098.1 400.5 C1103.4 397.5 1108.8 394.8 1114.1 392.0 C1119.4 389.1 1124.8 386.3 1130.1 383.5 C1135.4 380.7 1140.7 377.9 1146.1 375.0 C1151.4 372.2 1156.7 369.4 1162.1 366.6 C1167.4 363.7 1172.7 360.9 1178.0 358.0 C1183.4 355.2 1188.7 352.7 1194.0 349.5 C1199.4 346.3 1204.7 342.5 1210.0 338.7 C1215.4 334.9 1220.7 330.3 1226.0 326.6 C1231.3 322.9 1236.7 319.9 1242.0 316.6 C1247.3 313.3 1255.3 308.5 1258.0 306.9" stroke-width="1.4" fill="none"/>
<path d="M1343.5 246.0 L1310.6 267.8 L1301.0 280.0 L1292.0 282.0" stroke-width="1.4" fill="none" />
<path d="M1308.0 252.5 L1343.0 229.5" stroke-width="1.4" fill="none" />
<path d="M1309.5 259.5 L1343.7 236.5" stroke-width="1.4" fill="none" />
<path d="M1308.0 252.5 C1307.6 253.1 1305.8 254.8 1305.5 256.0 C1305.2 257.2 1305.8 258.9 1306.5 259.5 C1307.2 260.1 1309.0 259.5 1309.5 259.5" stroke-width="1.4" fill="none"/>
<path d="M942.0 446.5 L989.6 431.3 L991.0 440.0" stroke-width="1.4" fill="none" />
<path d="M944.8 461.0 L985.6 441.9" stroke-width="1.4" fill="none" />
<path d="M1289.6 261.8 L1298.6 259.5 L1299.4 267.8 L1290.4 270.0 Z" stroke-width="1.5" fill="none" />
<path d="M1002.8 425.4 L1011.4 424.0 L1012.0 432.0 L1003.4 435.3 Z" stroke-width="1.5" fill="none" />
<circle cx="1045.2" cy="410.9" r="3.6" stroke-width="1" fill="none"/>
<path d="M1263.0 281.0 C1262.7 281.7 1261.0 283.7 1261.0 285.0 C1261.0 286.3 1262.2 288.7 1263.0 289.0 C1263.8 289.3 1265.7 288.2 1266.0 287.0 C1266.3 285.8 1265.5 283.0 1265.0 282.0 C1264.5 281.0 1263.3 281.2 1263.0 281.0" stroke-width="1.4" fill="none"/>
<path d="M1265.0 288.0 L1267.0 300.0" stroke-width="1.4" fill="none" />
<path d="M1270.0 279.0 C1269.7 280.0 1268.0 282.0 1268.0 285.0 C1268.0 288.0 1269.0 295.5 1270.0 297.0 C1271.0 298.5 1273.5 295.7 1274.0 294.0 C1274.5 292.3 1273.7 288.3 1273.0 287.0 C1272.3 285.7 1270.5 286.2 1270.0 286.0" stroke-width="1.4" fill="none"/>
<path d="M1277.0 276.0 L1279.0 292.0" stroke-width="1.4" fill="none" />
<path d="M1237.0 300.0 L1250.0 297.0 L1262.0 293.0" stroke-width="1.4" fill="none" />
<path d="M1237.0 309.0 L1252.0 305.0 L1264.0 301.0" stroke-width="1.4" fill="none" />
<path d="M1224.0 308.0 L1225.0 316.0" stroke-width="1.4" fill="none" />
<path d="M1224.0 308.0 L1228.0 307.0" stroke-width="1.4" fill="none" />
<path d="M1021.0 434.6 L1022.0 424.0 L1039.7 421.4 L1040.0 430.0" stroke-width="1.4" fill="none" />
<path d="M1027.0 423.5 L1028.0 433.0" stroke-width="1.4" fill="none" />
<path d="M1033.0 422.5 L1034.0 431.5" stroke-width="1.4" fill="none" />
<path d="M1022.0 440.0 L1034.0 432.0 L1046.0 430.0" stroke-width="1.4" fill="none" />
<path d="M1071.0 404.0 L1070.0 396.0 L1084.5 391.0 L1085.0 399.0" stroke-width="1.4" fill="none" />
<path d="M1075.0 394.5 L1076.0 402.0" stroke-width="1.4" fill="none" />
<path d="M1080.0 392.5 L1081.0 400.0" stroke-width="1.4" fill="none" />
<path d="M1048.0 428.0 L1058.0 416.0 L1070.0 405.0" stroke-width="1.4" fill="none" />
<path d="M1040.0 418.0 L1052.0 414.0 L1068.0 397.0" stroke-width="1.4" fill="none" />
<path d="M1127.5 369.0 L1130.5 375.5 L1127.0 376.5 Z" stroke-width="1.6" fill="#000" />
<path d="M1183.5 333.0 L1187.0 339.5 L1183.0 340.5 Z" stroke-width="1.6" fill="#000" />
<path d="M1235.5 303.0 L1238.5 309.0 L1235.0 310.0 Z" stroke-width="1.6" fill="#000" />
<path d="M1101.0 506.0 C1109.1 502.5 1129.2 494.4 1149.8 484.9 C1170.4 475.3 1203.9 459.5 1224.7 448.7 C1245.5 437.9 1260.5 428.5 1274.5 420.3 C1288.5 412.1 1297.5 407.0 1309.0 399.7 C1320.5 392.4 1331.9 384.2 1343.4 376.4 C1354.9 368.6 1370.7 358.1 1377.9 353.0 C1385.1 347.9 1385.1 347.2 1386.6 346.0" stroke-width="2" fill="none"/>
<path d="M1394.0 341.0 L1422.8 323.0 L1425.3 323.0 L1434.0 329.5 L1434.0 349.7 L1432.2 363.4" stroke-width="2" fill="none" />
<path d="M1386.6 346.0 C1386.6 345.2 1385.9 342.2 1386.5 341.0 C1387.1 339.8 1388.7 338.8 1390.0 338.5 C1391.3 338.2 1393.8 338.6 1394.5 339.0 C1395.2 339.4 1394.1 340.7 1394.0 341.0" stroke-width="1.5" fill="none"/>
<path d="M1111.0 500.0 C1111.2 499.3 1111.0 497.0 1112.0 496.0 C1113.0 495.0 1115.6 493.9 1117.0 494.0 C1118.4 494.1 1119.9 496.1 1120.5 496.5" stroke-width="1.5" fill="none"/>
<path d="M1112.3 511.5 C1122.7 507.1 1151.8 495.2 1174.7 484.9 C1197.6 474.6 1230.2 459.9 1249.7 449.9 C1269.2 439.9 1276.1 434.7 1291.7 425.0 C1307.3 415.3 1326.2 403.1 1343.4 391.5 C1360.6 379.9 1380.1 365.3 1395.0 355.5 C1409.9 345.7 1426.7 336.6 1433.0 332.8" stroke-width="1.4" fill="none"/>
<path d="M1112.0 547.5 C1121.7 543.2 1151.2 530.2 1170.0 521.5 C1188.8 512.8 1209.4 503.1 1224.7 495.0 C1240.0 486.9 1249.7 480.4 1262.0 473.0 C1274.3 465.6 1287.3 457.3 1298.6 450.5 C1309.9 443.7 1319.4 438.5 1330.0 432.0 C1340.6 425.5 1350.8 418.8 1362.0 411.5 C1373.2 404.2 1385.3 396.0 1397.0 388.0 C1408.7 380.0 1426.3 367.5 1432.2 363.4" stroke-width="2" fill="none"/>
<path d="M1101.0 506.0 L1101.0 542.0 L1112.0 547.5" stroke-width="2" fill="none" />
<path d="M1112.0 511.5 L1112.0 547.5" stroke-width="1.6" fill="none" />
<path d="M1101.0 506.0 L1112.3 511.5" stroke-width="1.6" fill="none" />
<path d="M1121.0 512.4 L1143.5 504.9 L1144.8 524.9 L1121.0 534.8 Z" stroke-width="1.6" fill="none" />
<path d="M1138.5 507.5 L1139.6 522.1" stroke-width="1.4" fill="none" />
<path d="M1121.0 527.6 L1139.6 522.1 L1144.8 524.9" stroke-width="1.4" fill="none" />
<path d="M1152.2 502.4 L1183.5 488.6 L1183.5 509.9 L1152.2 522.4 Z" stroke-width="1.6" fill="none" />
<path d="M1176.6 492.6 L1176.6 507.6" stroke-width="1.4" fill="none" />
<path d="M1152.2 516.0 L1176.6 507.6 L1183.5 509.9" stroke-width="1.4" fill="none" />
<path d="M1194.7 483.6 L1224.7 468.7 L1224.7 487.4 L1194.7 501.0 Z" stroke-width="1.6" fill="none" />
<path d="M1218.1 473.0 L1218.1 485.4" stroke-width="1.4" fill="none" />
<path d="M1194.7 495.4 L1218.1 485.4 L1224.7 487.4" stroke-width="1.4" fill="none" />
<path d="M1233.4 466.2 L1262.1 451.4 L1262.1 467.4 L1233.4 480.0 Z" stroke-width="1.6" fill="none" />
<path d="M1255.8 455.7 L1255.8 465.2" stroke-width="1.4" fill="none" />
<path d="M1233.4 475.6 L1255.8 465.2 L1262.1 467.4" stroke-width="1.4" fill="none" />
<path d="M1268.4 450.5 L1297.8 436.0 L1298.6 445.8 L1269.3 460.0 Z" stroke-width="1.6" fill="none" />
<path d="M1303.4 424.0 L1332.2 407.4 L1332.2 425.8 L1303.0 441.2 Z" stroke-width="1.6" fill="none" />
<path d="M1325.9 412.1 L1325.8 424.2" stroke-width="1.4" fill="none" />
<path d="M1303.1 435.7 L1325.8 424.2 L1332.2 425.8" stroke-width="1.4" fill="none" />
<path d="M1339.0 400.5 L1368.4 385.0 L1368.4 404.0 L1338.6 419.5 Z" stroke-width="1.6" fill="none" />
<path d="M1361.9 389.4 L1361.8 402.4" stroke-width="1.4" fill="none" />
<path d="M1338.7 413.4 L1361.8 402.4 L1368.4 404.0" stroke-width="1.4" fill="none" />
<path d="M1376.2 378.0 L1402.0 361.7 L1402.0 380.7 L1375.3 397.0 Z" stroke-width="1.6" fill="none" />
<path d="M1396.3 366.3 L1396.1 379.3" stroke-width="1.4" fill="none" />
<path d="M1375.6 390.9 L1396.1 379.3 L1402.0 380.7" stroke-width="1.4" fill="none" />
<path d="M1409.8 353.0 L1428.0 342.0 L1428.8 361.7 L1409.8 373.8 Z" stroke-width="1.6" fill="none" />
<path d="M1424.0 345.4 L1424.6 359.4" stroke-width="1.4" fill="none" />
<path d="M1409.8 367.1 L1424.6 359.4 L1428.8 361.7" stroke-width="1.4" fill="none" />
<path d="M857.3 541.8 L863.7 538.0 L1029.7 596.0 L1038.6 594.2 L1046.2 585.4 L1057.6 565.0 L1071.6 572.7 L1074.1 589.2 L1069.0 608.2 L1058.9 617.0 L1045.0 622.0 L1029.7 619.6 L881.4 568.9 Z" stroke-width="1.9" fill="none" />
<path d="M881.1 552.2 L1029.7 600.7" stroke-width="1.4" fill="none" />
<path d="M881.2 556.8 L1029.7 605.9" stroke-width="1.4" fill="none" />
<path d="M881.2 561.0 L1029.7 610.6" stroke-width="1.4" fill="none" />
<path d="M881.3 565.1 L1029.7 615.4" stroke-width="1.4" fill="none" />
<path d="M881.0 545.0 L881.4 568.9" stroke-width="1.6" fill="none" />
<path d="M884.0 546.0 L884.4 569.9" stroke-width="1.6" fill="none" />
<path d="M906.5 562.0 L906.5 577.5" stroke-width="1.4" fill="none" />
<path d="M866.0 542.5 L1029.7 600.0" stroke-width="1.4" fill="none" />
<path d="M859.0 543.0 L872.0 547.5 L872.0 556.0" stroke-width="1.4" fill="none" />
<path d="M866.0 543.0 L866.0 549.0 L871.0 551.0" stroke-width="1.4" fill="none" />
<path d="M921.0 560.0 L921.0 582.4" stroke-width="1.4" fill="none" />
<path d="M946.3 568.9 L946.3 591.1" stroke-width="1.4" fill="none" />
<path d="M965.0 575.4 L965.0 597.5" stroke-width="1.4" fill="none" />
<path d="M983.7 581.9 L983.7 603.9" stroke-width="1.4" fill="none" />
<path d="M1005.0 589.4 L1005.0 611.2" stroke-width="1.4" fill="none" />
<path d="M1025.0 596.4 L1025.0 618.0" stroke-width="1.4" fill="none" />
<path d="M893.0 551.2 L900.0 553.2 L898.0 558.2 L894.0 556.2" stroke-width="1.4" fill="none" />
<path d="M924.0 562.1 L931.0 564.1 L929.0 569.1 L925.0 567.1" stroke-width="1.4" fill="none" />
<path d="M953.0 572.2 L960.0 574.2 L958.0 579.2 L954.0 577.2" stroke-width="1.4" fill="none" />
<path d="M973.0 579.2 L980.0 581.2 L978.0 586.2 L974.0 584.2" stroke-width="1.4" fill="none" />
<path d="M996.0 587.2 L1003.0 589.2 L1001.0 594.2 L997.0 592.2" stroke-width="1.4" fill="none" />
<path d="M1029.7 601.0 C1031.6 600.8 1037.6 601.8 1041.0 600.0 C1044.4 598.2 1046.8 594.8 1050.0 590.0 C1053.2 585.2 1058.3 574.2 1060.0 571.0" stroke-width="1.4" fill="none"/>
<path d="M1029.7 606.0 C1031.9 606.0 1039.0 607.7 1043.0 606.0 C1047.0 604.3 1050.5 601.2 1054.0 596.0 C1057.5 590.8 1062.3 578.5 1064.0 575.0" stroke-width="1.4" fill="none"/>
<path d="M1029.7 612.0 C1032.4 612.2 1041.1 614.8 1046.0 613.0 C1050.9 611.2 1055.3 606.5 1059.0 601.0 C1062.7 595.5 1066.5 583.5 1068.0 580.0" stroke-width="1.4" fill="none"/>
<path d="M1050.0 590.0 L1066.0 611.0" stroke-width="1.4" fill="none" />
<path d="M1046.0 600.0 L1070.0 586.0" stroke-width="1.4" fill="none" />
<path d="M1038.0 595.0 L1043.0 621.0" stroke-width="1.4" fill="none" />
<path d="M1056.0 577.0 L1072.0 590.0" stroke-width="1.4" fill="none" />
<path d="M1052.0 478.0 C1051.7 476.3 1049.5 471.3 1050.0 468.0 C1050.5 464.7 1052.3 460.3 1055.0 458.0 C1057.7 455.7 1062.5 454.2 1066.0 454.0 C1069.5 453.8 1073.7 455.0 1076.0 457.0 C1078.3 459.0 1079.5 462.8 1080.0 466.0 C1080.5 469.2 1080.3 473.2 1079.0 476.0 C1077.7 478.8 1074.8 481.7 1072.0 483.0 C1069.2 484.3 1065.3 484.8 1062.0 484.0 C1058.7 483.2 1053.7 479.0 1052.0 478.0" stroke-width="1.8" fill="none"/>
<ellipse cx="1071" cy="470" rx="7" ry="8.5" stroke-width="1.1" fill="none"/>
<ellipse cx="1072" cy="470" rx="4" ry="5" stroke-width="1" fill="none"/>
<path d="M1058.0 461.0 L1063.0 458.0 L1069.0 461.0" stroke-width="1.4" fill="none" />
<path d="M1056.0 476.0 L1060.0 480.0 L1066.0 479.0" stroke-width="1.4" fill="none" />
<path d="M1058.0 461.0 L1056.0 476.0" stroke-width="1.4" fill="none" />
<path d="M1063.0 458.0 L1063.0 462.0" stroke-width="1.4" fill="none" />
<path d="M1060.0 480.0 L1061.0 476.0" stroke-width="1.4" fill="none" />
<path d="M877.0 500.0 L877.0 495.0 L881.0 491.5 L888.0 491.5 L892.0 495.0 L892.0 507.0" stroke-width="1.6" fill="none" />
<path d="M877.0 500.0 L877.0 512.0" stroke-width="1.6" fill="none" />
<path d="M885.0 497.0 L885.0 512.0" stroke-width="1.4" fill="none" />
<path d="M877.0 495.0 C878.2 495.4 881.5 497.5 884.0 497.5 C886.5 497.5 890.7 495.4 892.0 495.0" stroke-width="1.4" fill="none"/>
<path d="M892.0 502.0 L901.0 503.0 L899.0 511.0 L890.0 519.0 L880.0 522.0 L871.0 521.0 L870.0 516.0 L877.0 512.0" stroke-width="1.6" fill="none" />
<path d="M873.0 509.0 L877.0 506.0" stroke-width="1.4" fill="none" />
<path d="M880.0 516.0 L880.0 522.0" stroke-width="1.4" fill="none" />
<path d="M890.0 512.0 L890.0 519.0" stroke-width="1.4" fill="none" />
<path d="M870.0 516.0 L880.0 516.0 L890.0 512.0 L897.0 505.0" stroke-width="1.4" fill="none" />
<path d="M864.0 618.0 L864.0 586.0 L868.5 581.5 L873.5 586.0 L873.5 618.0" stroke-width="1.8" fill="none" />
<path d="M864.0 586.0 L868.5 589.0 L873.5 586.0" stroke-width="1.4" fill="none" />
<ellipse cx="868" cy="621.5" rx="12.5" ry="6.5" stroke-width="1.3" fill="#fff"/>
<path d="M864.0 618.0 L864.0 612.0" stroke-width="1.8" fill="none" />
<path d="M873.5 618.0 L873.5 612.0" stroke-width="1.8" fill="none" />
<rect x="863.3" y="600" width="10.8" height="19" fill="#fff" stroke="none"/>
<path d="M864.0 620.0 L864.0 600.0" stroke-width="1.8" fill="none" />
<path d="M873.5 620.0 L873.5 600.0" stroke-width="1.8" fill="none" />
<path d="M864.0 620.0 C864.8 620.3 866.9 622.0 868.5 622.0 C870.1 622.0 872.7 620.3 873.5 620.0" stroke-width="1.4" fill="none"/>
<path d="M858.5 626.0 L859.5 631.0 L864.0 634.0 L872.0 634.0 L877.0 631.0 L878.0 626.0" stroke-width="1.6" fill="none" />
<path d="M864.0 628.0 L864.0 634.0" stroke-width="1.4" fill="none" />
<path d="M872.0 628.0 L872.0 634.0" stroke-width="1.4" fill="none" />
<path d="M1175.5 622.5 L1178.0 620.8 L1199.6 622.5 L1200.9 617.5 L1209.7 614.4 L1222.4 621.3 L1241.4 620.0 L1264.2 613.7 L1264.2 599.7 L1269.3 597.2 L1282.0 599.7 L1294.7 604.8 L1299.7 602.3 L1308.6 612.4 L1296.0 617.5 L1295.2 641.6 L1249.0 645.4 L1241.4 644.1 L1228.7 634.0 L1216.1 634.0 L1216.1 648.7 L1208.5 648.7 L1178.0 639.0 L1175.5 630.2 Z" stroke-width="1.8" fill="none" />
<path d="M1178.0 625.5 C1183.0 626.6 1197.5 631.8 1208.0 632.0 C1218.5 632.2 1226.3 630.5 1241.0 627.0 C1255.7 623.5 1286.8 613.7 1296.0 611.0" stroke-width="1.4" fill="none"/>
<path d="M1216.1 634.0 C1218.1 633.4 1220.3 632.2 1228.0 630.5 C1235.7 628.8 1250.7 626.2 1262.0 624.0 C1273.3 621.8 1290.3 618.6 1296.0 617.5" stroke-width="1.4" fill="none"/>
<path d="M1269.3 597.2 L1274.0 603.0 L1274.0 611.0" stroke-width="1.4" fill="none" />
<path d="M1264.2 613.7 L1274.0 611.0" stroke-width="1.4" fill="none" />
<path d="M1228.7 634.0 L1247.0 634.0 L1249.0 645.4" stroke-width="1.4" fill="none" />
<path d="M1294.7 604.8 L1296.0 611.0" stroke-width="1.4" fill="none" />
<path d="M1296.0 611.0 L1304.0 608.0" stroke-width="1.4" fill="none" />
<path d="M1326.6 632.0 L1349.6 644.7" stroke-width="1.6" fill="none" />
<path d="M1331.4 623.2 L1354.4 635.9" stroke-width="1.6" fill="none" />
<ellipse cx="1331.8" cy="629.2" rx="2.2" ry="5.0" transform="rotate(28.9 1331.8 629.2)" stroke-width="1.4" fill="none"/>
<ellipse cx="1336.4" cy="631.7" rx="2.2" ry="5.0" transform="rotate(28.9 1336.4 631.7)" stroke-width="1.4" fill="none"/>
<ellipse cx="1341.0" cy="634.3" rx="2.2" ry="5.0" transform="rotate(28.9 1341.0 634.3)" stroke-width="1.4" fill="none"/>
<ellipse cx="1345.6" cy="636.8" rx="2.2" ry="5.0" transform="rotate(28.9 1345.6 636.8)" stroke-width="1.4" fill="none"/>
<ellipse cx="1350.2" cy="639.3" rx="2.2" ry="5.0" transform="rotate(28.9 1350.2 639.3)" stroke-width="1.4" fill="none"/>
<ellipse cx="1329.0" cy="627.6" rx="2.4" ry="5.0" transform="rotate(28.9 1329.0 627.6)" stroke-width="1.5" fill="#fff"/>
<ellipse cx="1362.5" cy="646.5" rx="10.5" ry="15" transform="rotate(-22 1362.5 646.5)" stroke-width="1.7" fill="#fff"/>
<ellipse cx="1366.5" cy="648.5" rx="10" ry="13.5" transform="rotate(-22 1366.5 648.5)" stroke-width="1.5" fill="#fff"/>
<circle cx="1368.0" cy="650.5" r="8" stroke-width="1.3" fill="none"/>
<circle cx="1369.5" cy="651.0" r="5" stroke-width="1.3" fill="none"/>
<circle cx="1370.0" cy="651.0" r="2.6" stroke-width="1.2" fill="none"/>
<path d="M1368.0 647.5 L1371.5 655.0" stroke-width="1.4" fill="none" />
<path d="M1366.5 652.5 L1373.5 649.5" stroke-width="1.4" fill="none" />
<path d="M1722.6 572.0 L1745.6 584.7" stroke-width="1.6" fill="none" />
<path d="M1727.4 563.2 L1750.4 575.9" stroke-width="1.6" fill="none" />
<ellipse cx="1727.8" cy="569.2" rx="2.2" ry="5.0" transform="rotate(28.9 1727.8 569.2)" stroke-width="1.4" fill="none"/>
<ellipse cx="1732.4" cy="571.7" rx="2.2" ry="5.0" transform="rotate(28.9 1732.4 571.7)" stroke-width="1.4" fill="none"/>
<ellipse cx="1737.0" cy="574.3" rx="2.2" ry="5.0" transform="rotate(28.9 1737.0 574.3)" stroke-width="1.4" fill="none"/>
<ellipse cx="1741.6" cy="576.8" rx="2.2" ry="5.0" transform="rotate(28.9 1741.6 576.8)" stroke-width="1.4" fill="none"/>
<ellipse cx="1746.2" cy="579.3" rx="2.2" ry="5.0" transform="rotate(28.9 1746.2 579.3)" stroke-width="1.4" fill="none"/>
<ellipse cx="1725.0" cy="567.6" rx="2.4" ry="5.0" transform="rotate(28.9 1725.0 567.6)" stroke-width="1.5" fill="#fff"/>
<ellipse cx="1758.5" cy="586.5" rx="10.5" ry="15" transform="rotate(-22 1758.5 586.5)" stroke-width="1.7" fill="#fff"/>
<ellipse cx="1762.5" cy="588.5" rx="10" ry="13.5" transform="rotate(-22 1762.5 588.5)" stroke-width="1.5" fill="#fff"/>
<circle cx="1764.0" cy="590.5" r="8" stroke-width="1.3" fill="none"/>
<circle cx="1765.5" cy="591.0" r="5" stroke-width="1.3" fill="none"/>
<circle cx="1766.0" cy="591.0" r="2.6" stroke-width="1.2" fill="none"/>
<path d="M1764.0 587.5 L1767.5 595.0" stroke-width="1.4" fill="none" />
<path d="M1762.5 592.5 L1769.5 589.5" stroke-width="1.4" fill="none" />
<path d="M1531.5 489.0 L1537.0 485.5 L1548.0 486.0 L1556.0 489.0" stroke-width="1.6" fill="none" />
<path d="M1531.5 489.0 L1536.0 504.0 L1545.0 510.0" stroke-width="1.6" fill="none" />
<path d="M1537.0 485.5 L1540.0 497.0 L1548.0 503.0" stroke-width="1.4" fill="none" />
<path d="M1548.0 486.0 L1550.0 492.0" stroke-width="1.4" fill="none" />
<ellipse cx="1556.5" cy="502.5" rx="11" ry="13.5" transform="rotate(-15 1556.5 502.5)" stroke-width="1.3" fill="#fff"/>
<ellipse cx="1560.5" cy="503.5" rx="6.5" ry="7.5" stroke-width="1.1" fill="none"/>
<path d="M1790.0 590.0 C1790.8 588.3 1792.5 582.1 1795.0 580.0 C1797.5 577.9 1801.8 577.3 1805.0 577.5 C1808.2 577.7 1812.1 578.6 1814.0 581.0 C1815.9 583.4 1816.5 588.2 1816.5 592.0 C1816.5 595.8 1815.8 600.7 1814.0 604.0 C1812.2 607.3 1808.8 610.5 1806.0 612.0 C1803.2 613.5 1799.7 614.0 1797.0 613.0 C1794.3 612.0 1791.4 608.5 1790.0 606.0 C1788.6 603.5 1788.5 600.7 1788.5 598.0 C1788.5 595.3 1789.8 591.3 1790.0 590.0" stroke-width="1.6" fill="none"/>
<path d="M1789.0 588.5 L1783.5 589.0 L1781.5 593.0 L1783.0 598.0 L1788.5 598.5" stroke-width="1.5" fill="none" />
<path d="M1421.2 849.0 L1421.2 835.5 L1423.7 833.0 L1429.7 833.0 L1432.2 835.5 L1432.2 849.0" stroke-width="1.6" fill="none" />
<path d="M1421.2 838.0 L1432.2 838.0" stroke-width="1.4" fill="none" />
<path d="M1421.2 842.0 L1432.2 842.0" stroke-width="1.4" fill="none" />
<path d="M1421.2 846.0 L1432.2 846.0" stroke-width="1.4" fill="none" />
<path d="M1421.2 845.5 C1420.3 845.8 1417.0 845.9 1415.7 847.0 C1414.4 848.1 1413.2 850.2 1413.2 852.0 C1413.2 853.8 1413.5 856.5 1415.7 858.0 C1418.0 859.5 1423.0 861.0 1426.7 861.0 C1430.4 861.0 1435.5 859.5 1437.7 858.0 C1440.0 856.5 1440.2 853.8 1440.2 852.0 C1440.2 850.2 1439.0 848.1 1437.7 847.0 C1436.4 845.9 1433.1 845.8 1432.2 845.5" stroke-width="1.8" fill="none"/>
<path d="M1421.2 849.0 C1422.1 849.4 1424.9 851.5 1426.7 851.5 C1428.5 851.5 1431.3 849.4 1432.2 849.0" stroke-width="1.4" fill="none"/>
<path d="M1417.7 852.0 C1419.2 852.7 1423.7 856.0 1426.7 856.0 C1429.7 856.0 1434.2 852.7 1435.7 852.0" stroke-width="1.4" fill="none"/>
<path d="M1416.2 858.5 L1417.2 866.0 L1421.7 869.0 L1431.7 869.0 L1436.2 866.0 L1437.2 858.5" stroke-width="1.6" fill="none" />
<path d="M1422.7 860.5 L1422.7 869.0" stroke-width="1.4" fill="none" />
<path d="M1430.7 860.5 L1430.7 869.0" stroke-width="1.4" fill="none" />
<path d="M1640.9 771.0 L1640.9 757.5 L1643.4 755.0 L1649.4 755.0 L1651.9 757.5 L1651.9 771.0" stroke-width="1.6" fill="none" />
<path d="M1640.9 760.0 L1651.9 760.0" stroke-width="1.4" fill="none" />
<path d="M1640.9 764.0 L1651.9 764.0" stroke-width="1.4" fill="none" />
<path d="M1640.9 768.0 L1651.9 768.0" stroke-width="1.4" fill="none" />
<path d="M1640.9 767.5 C1640.0 767.8 1636.7 767.9 1635.4 769.0 C1634.1 770.1 1632.9 772.2 1632.9 774.0 C1632.9 775.8 1633.2 778.5 1635.4 780.0 C1637.7 781.5 1642.7 783.0 1646.4 783.0 C1650.1 783.0 1655.2 781.5 1657.4 780.0 C1659.7 778.5 1659.9 775.8 1659.9 774.0 C1659.9 772.2 1658.7 770.1 1657.4 769.0 C1656.1 767.9 1652.8 767.8 1651.9 767.5" stroke-width="1.8" fill="none"/>
<path d="M1640.9 771.0 C1641.8 771.4 1644.6 773.5 1646.4 773.5 C1648.2 773.5 1651.0 771.4 1651.9 771.0" stroke-width="1.4" fill="none"/>
<path d="M1637.4 774.0 C1638.9 774.7 1643.4 778.0 1646.4 778.0 C1649.4 778.0 1653.9 774.7 1655.4 774.0" stroke-width="1.4" fill="none"/>
<path d="M1635.9 780.5 L1636.9 788.0 L1641.4 791.0 L1651.4 791.0 L1655.9 788.0 L1656.9 780.5" stroke-width="1.6" fill="none" />
<path d="M1642.4 782.5 L1642.4 791.0" stroke-width="1.4" fill="none" />
<path d="M1650.4 782.5 L1650.4 791.0" stroke-width="1.4" fill="none" />
<path d="M998.0 699.3 L989.5 701.3 L986.4 708.0 L987.6 715.3 L991.9 720.1 L998.5 717.5" stroke-width="1.8" fill="none" />
<path d="M987.5 708.8 L996.5 707.6" stroke-width="1.4" fill="none" />
<path d="M989.5 701.3 L991.0 705.0" stroke-width="1.4" fill="none" />
<path d="M991.9 720.1 L992.5 716.0" stroke-width="1.4" fill="none" />
<path d="M1010.0 700.0 L1022.0 699.5 L1023.6 701.5 L1023.6 710.0 L1022.0 711.6 L1011.0 712.2" stroke-width="1.8" fill="none" />
<path d="M1016.8 699.8 L1016.8 711.8" stroke-width="1.5" fill="none" />
<ellipse cx="1004.8" cy="708.3" rx="7.2" ry="13" stroke-width="1.8" fill="#fff"/>
<ellipse cx="1006.8" cy="708.8" rx="4" ry="6.3" stroke-width="1.5" fill="none"/>
<path d="M1008.0 703.0 L1012.0 702.5" stroke-width="1.4" fill="none" />
<path d="M1009.0 714.5 L1012.0 712.3" stroke-width="1.4" fill="none" />
<path d="M1456.0 810.0 L1486.0 798.7 L1488.5 801.2 L1488.5 827.4 L1458.5 842.4 L1455.3 839.9 Z" stroke-width="1.8" fill="none" />
<path d="M1456.0 830.5 L1488.5 815.5" stroke-width="1.5" fill="none" />
<path d="M1613.5 731.0 L1619.8 724.8 L1634.8 719.8 L1667.2 706.0 L1677.2 694.8 L1681.0 677.4 L1691.0 669.9 L1703.4 669.4 L1708.4 674.0 L1724.0 674.0 L1723.4 679.9 L1668.5 725.3 L1639.8 726.8 L1631.0 731.0 L1619.8 736.0 Z" stroke-width="1.8" fill="none" />
<path d="M1636.0 723.5 C1640.5 723.2 1655.3 725.4 1663.0 722.0 C1670.7 718.6 1677.5 708.7 1682.0 703.0 C1686.5 697.3 1685.7 691.8 1690.0 688.0 C1694.3 684.2 1705.0 681.3 1708.0 680.0" stroke-width="1.4" fill="none"/>
<path d="M1685.0 673.5 L1691.0 680.0 L1708.0 675.0" stroke-width="1.4" fill="none" />
<ellipse cx="1696" cy="675.5" rx="4.5" ry="2.2" transform="rotate(-10 1696 675.5)" stroke-width="1" fill="none"/>
<ellipse cx="1625" cy="726.5" rx="3.6" ry="2" transform="rotate(-15 1625 726.5)" stroke-width="1" fill="none"/>
</svg>
<!--/DIAGRAM-->
</body></html>
